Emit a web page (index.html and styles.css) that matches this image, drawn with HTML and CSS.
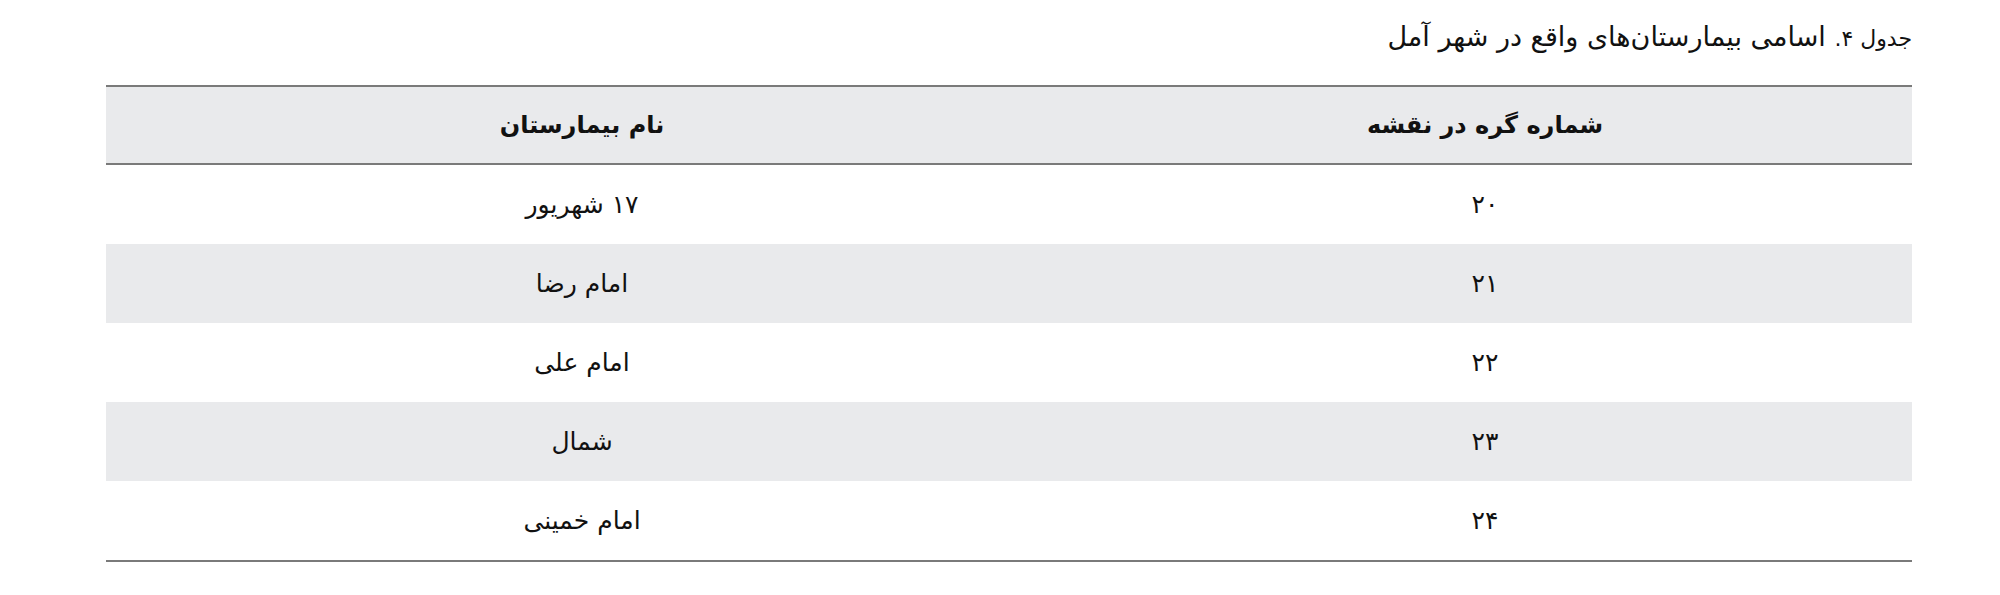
FILE: index.html
```html
<!DOCTYPE html>
<html lang="fa" dir="rtl">
<head>
<meta charset="utf-8">
<link rel="stylesheet" href="styles.css">
</head>
<body>
<div class="wrap">
  <div class="caption"><span class="label">جدول ۴.</span> اسامی بیمارستان‌های واقع در شهر آمل</div>
  <table class="tbl">
    <thead>
      <tr><th class="c1">شماره گره در نقشه</th><th class="c2">نام بیمارستان</th></tr>
    </thead>
    <tbody>
      <tr><td>۲۰</td><td>۱۷ شهریور</td></tr>
      <tr class="alt"><td>۲۱</td><td>امام رضا</td></tr>
      <tr><td>۲۲</td><td>امام علی</td></tr>
      <tr class="alt"><td>۲۳</td><td>شمال</td></tr>
      <tr><td>۲۴</td><td>امام خمینی</td></tr>
    </tbody>
  </table>
</div>
</body>
</html>
```
FILE: styles.css
```css
html, body { margin: 0; padding: 0; background: #fff; }
body {
  font-family: "DejaVu Sans", sans-serif;
  color: #111;
}
.wrap {
  margin-left: 106px;
  margin-right: 88px;
  padding-top: 17px;
}
.caption {
  font-size: 27px;
  line-height: 40px;
  height: 40px;
  text-align: right;
  margin-bottom: 28px;
}
.caption .label { font-size: 22px; }
.tbl {
  width: 100%;
  border-collapse: collapse;
  border-top: 2px solid #7a7a7a;
  border-bottom: 2px solid #7a7a7a;
}
.tbl th {
  background: #e9eaec;
  font-weight: bold;
  font-size: 24px;
  height: 76px;
  padding: 0;
  text-align: center;
  border-bottom: 2px solid #7a7a7a;
}
.tbl th.c1 { width: 854px; }
.tbl td {
  font-size: 25px;
  height: 79px;
  padding: 0;
  text-align: center;
}
.tbl tr.alt td { background: #e9eaec; }
```
